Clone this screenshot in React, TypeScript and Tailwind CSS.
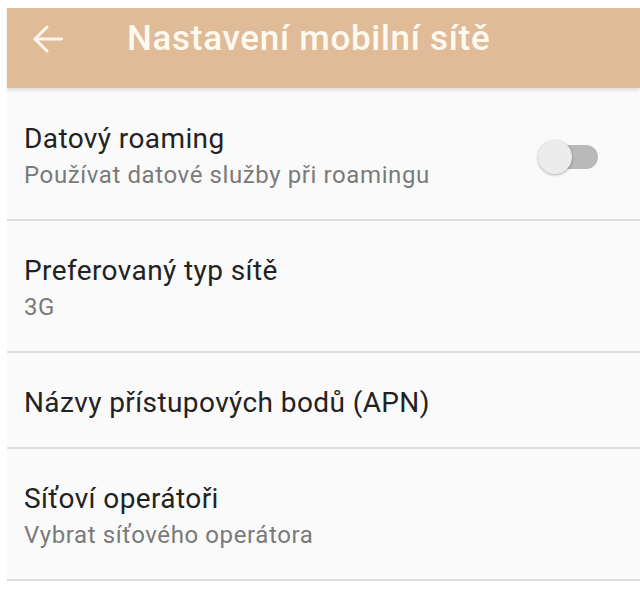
import React from 'react';

interface Setting {
  title: string;
  summary?: string;
  toggle?: boolean;
}

const settings: Setting[] = [
  { title: 'Datový roaming', summary: 'Používat datové služby při roamingu', toggle: true },
  { title: 'Preferovaný typ sítě', summary: '3G' },
  { title: 'Názvy přístupových bodů (APN)' },
  { title: 'Síťoví operátoři', summary: 'Vybrat síťového operátora' },
];

function BackArrow() {
  return (
    <svg width="30" height="28" viewBox="0 0 30 28" fill="none" stroke="#fdf7ee" strokeWidth="3" strokeLinecap="round" strokeLinejoin="round">
      <path d="M2 14H28.5" />
      <path d="M14 2L2 14L14 26" />
    </svg>
  );
}

function Switch() {
  return (
    <div className="relative h-[34px] w-[60px] shrink-0">
      <div className="absolute right-0 top-[5px] h-[24px] w-[56px] rounded-full bg-[#b9b9b9]" />
      <div className="absolute left-0 top-0 h-[34px] w-[34px] rounded-full bg-[#ececec] shadow-[0_1px_3px_rgba(0,0,0,0.3)]" />
    </div>
  );
}

export default function App() {
  return (
    <div className="h-[590px] w-[640px] overflow-hidden bg-white pl-[7px] pt-[8px] font-['Roboto',sans-serif]">
      <header className="relative z-10 h-[80px] bg-[#e0bb97] pt-[6px] shadow-[0_2px_3px_rgba(0,0,0,0.12)]">
        <div className="flex h-[50px] items-center">
          <div className="ml-[26px] w-[94px]">
            <BackArrow />
          </div>
          <h1 className="text-[35px] font-medium tracking-[0.7px] text-[#fff9f0]">Nastavení mobilní sítě</h1>
        </div>
      </header>
      <main className="bg-[#fafafa] pt-[1px]">
        {settings.map((s) => (
          <div key={s.title} className="flex items-center border-b-2 border-[#dedede] pb-[28px] pl-[17px] pr-[42px] pt-[34px]">
            <div className="flex-1">
              <div className="text-[28px] leading-[32px] tracking-[0.4px] text-[#222222]">{s.title}</div>
              {s.summary && (
                <div className="mt-[4px] text-[24px] leading-[32px] tracking-[0.6px] text-[#7a7a7a]">{s.summary}</div>
              )}
            </div>
            {s.toggle && <Switch />}
          </div>
        ))}
      </main>
    </div>
  );
}
